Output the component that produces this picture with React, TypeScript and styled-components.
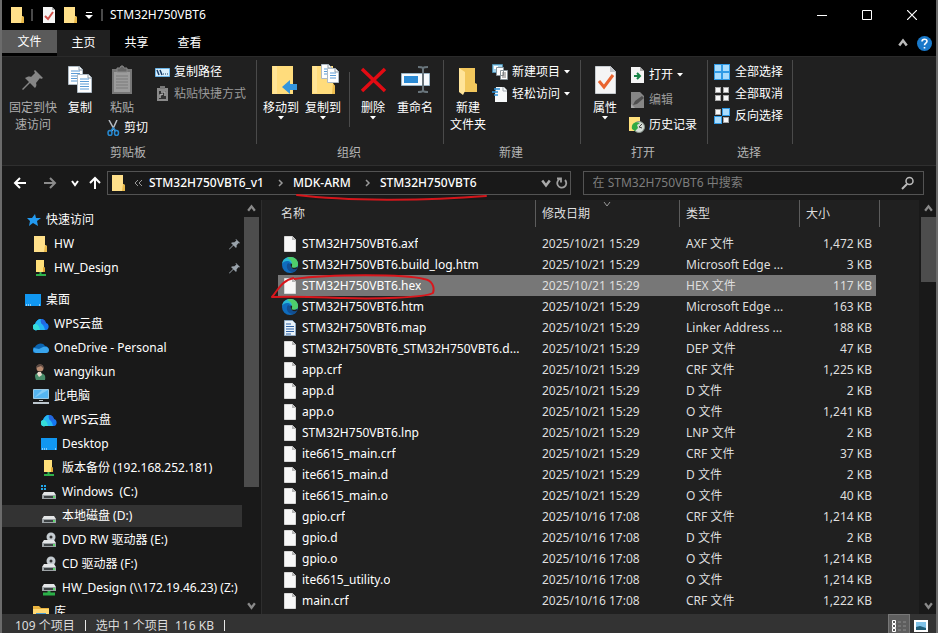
import React from "react";
import styled, { createGlobalStyle, css } from "styled-components";

const GlobalStyle = createGlobalStyle`
  * { box-sizing: border-box; }
  html, body { margin: 0; background: #000; }
  body, button, input, table {
    font-family: "Noto Sans", "Noto Sans CJK SC", sans-serif;
    font-size: 12px;
    line-height: 18px;
    color: #fff;
  }
  button { border: 0; margin: 0; padding: 0; background: none; cursor: default; }
  svg { display: block; flex: none; }
`;

/* ---------- frame ---------- */
const Window = styled.div`
  display: flex;
  flex-direction: column;
  height: 100vh;
  min-width: 800px;
  overflow: hidden;
  border: solid #6b6b6b;
  border-width: 0 2px;
  background: #191919;
`;

const TitleBar = styled.header`
  display: flex;
  align-items: center;
  height: 30px;
  flex: none;
  padding: 0 2px 0 8px;
  background: #000;
`;
const QuickTools = styled.div`
  display: flex;
  align-items: center;
`;
const QuickSeparator = styled.span`
  width: 2px;
  height: 12px;
  margin: 0 5px;
  background: #4a4a4a;
`;
const QuickButton = styled.button<{ $w: number }>`
  display: flex;
  justify-content: center;
  width: ${(p) => p.$w}px;
`;
const Title = styled.h1`
  flex: 1;
  margin: 0;
  padding-left: 2px;
  font-size: 12px;
  font-weight: 400;
`;
const CaptionButton = styled.button`
  display: flex;
  align-items: center;
  justify-content: center;
  width: 45px;
  height: 30px;
`;

const TabBar = styled.nav`
  display: flex;
  height: 26px;
  flex: none;
  background: #000;
`;
const Tab = styled.button<{ $kind?: "file" | "active" }>`
  width: 53px;
  height: 26px;
  ${(p) => p.$kind === "file" && css`
    width: 55px;
    height: 23px;
    background: #5a5a5a;
  `}
  ${(p) => p.$kind === "active" && css`background: #202020;`}
`;
const TabTools = styled.div`
  display: flex;
  align-items: center;
  gap: 9px;
  margin-left: auto;
  padding-right: 4px;
`;

/* ---------- ribbon ---------- */
const Ribbon = styled.section`
  display: flex;
  height: 110px;
  flex: none;
  padding-top: 3px;
  background: #202020;
  border-bottom: 1px solid #2f2f2f;
  border-top: 1px solid #2a2a2a;
`;
const Group = styled.section<{ $w: number }>`
  width: ${(p) => p.$w}px;
`;
const GroupBody = styled.div`
  display: flex;
  height: 84px;
  border-right: 1px solid #4a4a4a;
`;
const GroupLabel = styled.h2`
  margin: 0;
  padding-right: 3px;
  font-size: 12px;
  font-weight: 400;
  text-align: center;
  color: #b4b4b4;
`;
const BigButton = styled.button<{ $w: number; $dim?: boolean }>`
  display: flex;
  flex-direction: column;
  align-items: center;
  width: ${(p) => p.$w}px;
  padding-top: 4px;
  line-height: 17px;
  white-space: nowrap;
  color: ${(p) => (p.$dim ? "#aeaeae" : "#fff")};
  & > svg { margin-bottom: 3px; }
  & > svg + span + svg { margin: 0; }
`;
const ButtonColumn = styled.div<{ $w?: number; $left?: number; $pitch?: number }>`
  display: flex;
  flex-direction: column;
  width: ${(p) => (p.$w ? p.$w + "px" : "auto")};
  padding-left: ${(p) => p.$left || 0}px;
  padding-top: ${(p) => (p.$pitch ? 2 : 1)}px;
  & > button { height: ${(p) => p.$pitch || 22}px; }
`;
const PasteColumn = styled.div`
  display: flex;
  flex-direction: column;
  gap: 3px;
  width: 52px;
  padding-left: 2px;
`;
const SmallButton = styled.button<{ $dim?: boolean; $inset?: number }>`
  display: flex;
  align-items: center;
  gap: 4px;
  padding-left: ${(p) => p.$inset || 0}px;
  white-space: nowrap;
  color: ${(p) => (p.$dim ? "#9a9a9a" : "#fff")};
`;
const InnerRule = styled.span`
  width: 1px;
  height: 55px;
  margin-top: 12px;
  background: #4a4a4a;
`;

/* ---------- navigation ---------- */
const NavRow = styled.div`
  display: flex;
  align-items: center;
  height: 34px;
  flex: none;
  padding: 0 12px 0 3px;
`;
const NavButton = styled.button`
  display: flex;
  align-items: center;
  justify-content: center;
  width: 30px;
  height: 24px;
`;
const NarrowNavButton = styled(NavButton)`
  width: 20px;
`;
const Address = styled.div`
  display: flex;
  align-items: center;
  flex: 456 1 0;
  height: 24px;
  margin-left: 2px;
  padding: 0 2px 0 3px;
  border: 1px solid #535353;
`;
const Crumbs = styled.div`
  position: relative;
  display: flex;
  align-items: center;
`;
const Crumb = styled.a<{ $w: number }>`
  width: ${(p) => p.$w}px;
  color: #fff;
  font-size: 12px;
  font-weight: 500;
  text-decoration: none;
  white-space: nowrap;
`;
const CrumbArrow = styled.span<{ $w?: number }>`
  display: flex;
  justify-content: center;
  width: ${(p) => p.$w || 26}px;
`;
const AddressEnd = styled.div`
  display: flex;
  align-items: center;
  gap: 5px;
  margin-left: auto;
`;
const Underline = styled.svg`
  position: absolute;
  left: 2px;
  top: 18px;
  pointer-events: none;
`;
const SearchBox = styled.label`
  display: flex;
  align-items: center;
  flex: 322 1 0;
  height: 24px;
  margin-left: 12px;
  padding: 0 8px 0 9px;
  border: 1px solid #535353;
`;
const SearchInput = styled.input`
  flex: 1;
  min-width: 0;
  padding: 0;
  border: 0;
  outline: 0;
  background: none;
  &::placeholder { color: #7d7d7d; opacity: 1; }
`;

/* ---------- body ---------- */
const Body = styled.div`
  display: flex;
  flex: 1;
  min-height: 0;
`;
const Sidebar = styled.aside`
  display: flex;
  width: 260px;
  flex: none;
  padding-right: 2px;
  border-right: 1px solid #2e2e2e;
`;
const Tree = styled.ul`
  flex: 1;
  min-width: 0;
  margin: 0;
  padding: 8px 0 0;
  list-style: none;
  overflow: hidden;
`;
const TreeItem = styled.li<{ $gap?: boolean }>`
  margin-top: ${(p) => (p.$gap ? 8 : 0)}px;
`;
const TreeButton = styled.button<{ $level: number; $selected?: boolean }>`
  display: flex;
  align-items: center;
  gap: 5px;
  width: 100%;
  height: 24px;
  padding-left: ${(p) => 15 + p.$level * 8}px;
  white-space: nowrap;
  border: solid transparent;
  border-width: 1px 0;
  background: ${(p) => (p.$selected ? "#333" : "none")};
  background-clip: padding-box;
`;
const TreePin = styled.span`
  margin-left: auto;
  padding-right: 2px;
`;
const Scrollbar = styled.div`
  display: flex;
  flex-direction: column;
  width: 17px;
  flex: none;
  padding: 0 0 0 2px;
  background: #191919;
`;
const ScrollButton = styled.button`
  display: flex;
  align-items: center;
  justify-content: center;
  height: 17px;
  flex: none;
`;
const Track = styled.div`
  flex: 1;
`;
const Thumb = styled.div<{ $size: number }>`
  height: ${(p) => p.$size}%;
  background: #4d4d4d;
`;
const FilePane = styled.main`
  display: flex;
  flex: 1;
  min-width: 0;
  background: #202020;
  overflow: hidden;
`;
const TableArea = styled.div`
  flex: 1;
  min-width: 0;
  padding-left: 16px;
  overflow: hidden;
`;
const FileTable = styled.table`
  table-layout: fixed;
  width: 602px;
  border-collapse: separate;
  border-spacing: 0;
`;
const HeadCell = styled.th<{ $w: number; $first?: boolean }>`
  position: relative;
  width: ${(p) => p.$w}px;
  height: 27px;
  padding: 0 0 0 ${(p) => (p.$first ? 3 : 6)}px;
  border-right: 1px solid #5c5c5c;
  font-weight: 400;
  text-align: left;
  color: #dedede;
`;
const SortMark = styled.span`
  position: absolute;
  top: 0;
  left: 67px;
`;
const Spacer = styled.td`
  height: 6px;
  padding: 0;
`;
const FileRow = styled.tr<{ $selected?: boolean }>`
  & > td { background-color: ${(p) => (p.$selected ? "#777" : "transparent")}; }
`;
const Cell = styled.td<{ $num?: boolean }>`
  position: relative;
  height: 21px;
  padding: 0 0 0 6px;
  color: #dedede;
  white-space: nowrap;
  ${(p) => p.$num && css`
    padding: 0 4px 0 0;
    border-right: 4px solid transparent;
    background-clip: padding-box;
    text-align: right;
  `}
`;
const NameCell = styled(Cell)`
  padding-left: 3px;
  color: #fff;
`;
const FileName = styled.div`
  display: flex;
  align-items: center;
  gap: 3px;
  & > span { overflow: hidden; text-overflow: ellipsis; max-width: 228px; }
`;
const Circle = styled.svg`
  position: absolute;
  left: -8px;
  top: -1px;
  pointer-events: none;
  overflow: visible;
`;

/* ---------- status ---------- */
const StatusBar = styled.footer`
  display: flex;
  align-items: center;
  height: 19px;
  flex: none;
  padding: 4px 4px 0 13px;
  background: #333;
  color: #dcdcdc;
`;
const StatusText = styled.span`
  white-space: pre;
`;
const StatusRule = styled.span`
  width: 1px;
  height: 11px;
  margin: 0 10px;
  background: #e8e8e8;
`;
const ViewButtons = styled.div`
  display: flex;
  align-self: stretch;
  margin: -4px 0 0 auto;
`;
const ViewButton = styled.button<{ $on?: boolean }>`
  display: flex;
  justify-content: center;
  align-items: center;
  width: 22px;
  padding-top: 3px;
  background: ${(p) => (p.$on ? "#5e5e5e" : "none")};
  border: 1px solid ${(p) => (p.$on ? "#777" : "transparent")};
  border-bottom: 0;
`;

/* ---------- icons ---------- */
const Svg = ({ w, h, vb, children }: { w: number; h: number; vb?: string; children: React.ReactNode }) => (
  <svg width={w} height={h} viewBox={vb || `0 0 ${w} ${h}`} fill="none" aria-hidden="true">{children}</svg>
);
const Folder = () => (
  <Svg w={16} h={16}>
    <path d="M1 0h11v9l2 1v6H1z" fill="#ffe08a" />
    <path d="M12 9l2 1v6h-3z" fill="#e9b94a" />
  </Svg>
);
const NetFolder = () => (
  <Svg w={16} h={16}>
    <path d="M3 0h8v7l1 1v4H3z" fill="#ffe07a" /><path d="M10 7l2 1v4h-2z" fill="#e2ab35" />
    <path d="M7.500 12v3M3 15h10" stroke="#2fb24c" strokeWidth="2" />
  </Svg>
);
const CheckDoc = () => (
  <Svg w={14} h={16}>
    <path d="M1 0h9l3 3v13H1z" fill="#f5f5f5" /><path d="M10 0v3h3" fill="#aaa" />
    <path d="M3 9l3 3 5-7" stroke="#d0504a" strokeWidth="2" />
  </Svg>
);
const Caret = () => <Svg w={6} h={4}><path d="M0 0h6L3 3.500z" fill="#fff" /></Svg>;
const Chevron = ({ dir, color = "#fff", size = 8, weight = 2 }: { dir: "up" | "down" | "right"; color?: string; size?: number; weight?: number }) => (
  <Svg w={size} h={size} vb="0 0 8 8">
    <path d={{ up: "M1 6l3-4 3 4", down: "M1 2l3 4 3-4", right: "M3 1l3 3-3 3" }[dir]} stroke={color} strokeWidth={weight} />
  </Svg>
);
const Pin = ({ size, color }: { size: number; color: string }) => (
  <Svg w={size} h={size} vb="0 0 22 22">
    <path d="M14 0l8 8-2 1-1-1-4 5c1 2 0 4-1 5l-5-5-8 8-1-1 8-8-4-4c2-1 4-2 6-1l5-4-2-2z" fill={color} />
  </Svg>
);
const BigPin = () => (
  <Svg w={32} h={32}>
    <g transform="translate(5 6)"><path d="M13 0l8 8-2 1-1-1-4 5c1 2 0 4-1 5l-5-5-7 7-1-1 7-7-4-4c2-1 4-2 6-1l4-4-1-2z" fill="#858585" /></g>
  </Svg>
);
const Page = ({ x, y, w = 15, h = 19 }: { x: number; y: number; w?: number; h?: number }) => (
  <g transform={`translate(${x} ${y})`}>
    <path d={`M.5.5h${w - 4}l3 3v${h - 4}H.5z`} fill="#fff" stroke="#aebac4" />
    <path d={`M${w - 4} .5v3.500h3.500`} stroke="#8d9aa5" />
    {Array.from({ length: Math.floor((h - 6) / 2.5) }, (_, i) => (
      <path key={i} d={`M3 ${5 + i * 2.5}h${w - 6}`} stroke="#5a9bd5" />
    ))}
  </g>
);
const CopyIcon = () => <Svg w={32} h={32}><Page x={4} y={2} /><Page x={13} y={10} /></Svg>;
const PasteIcon = () => (
  <Svg w={32} h={32}>
    <path d="M6 5h20v25H6z" fill="#777" /><path d="M8 8h16v20H8z" fill="#9c9c9c" />
    <path d="M11 4h3l1-2h2l1 2h3v4H11z" fill="#666" stroke="#888" />
    <path d="M10 12h12M10 15h12M10 18h12M10 21h12M10 24h12" stroke="#7b7b7b" />
  </Svg>
);
const PathIcon = () => (
  <Svg w={16} h={16}>
    <path d="M1.500 4.500h14v8h-14z" fill="#d9effc" stroke="#6bb5e8" />
    <path d="M3 6l2 5M6 6l2 5" stroke="#143a66" strokeWidth="1.500" /><path d="M9 10h1M11 10h1M13 10h1" stroke="#143a66" />
  </Svg>
);
const ShortcutIcon = () => (
  <Svg w={16} h={16}>
    <path d="M3 2h11v13H3z" fill="#8a8a8a" /><path d="M6 0h5v3H6z" fill="#777" /><path d="M5 5h7v8H5z" fill="#333" />
    <path d="M6 12V9l3-1M7 6h4v4" stroke="#aaa" strokeWidth="1.500" />
  </Svg>
);
const CutIcon = () => (
  <Svg w={13} h={16}>
    <path d="M2 0l6 11M10 0L5 11" stroke="#b7bdc4" strokeWidth="1.500" />
    <ellipse cx="3" cy="13" rx="2" ry="2.500" stroke="#2689d1" strokeWidth="1.500" />
    <ellipse cx="9.500" cy="13" rx="2" ry="2.500" stroke="#2689d1" strokeWidth="1.500" />
    <path d="M4 11l2-3 3 3" stroke="#2689d1" strokeWidth="1.500" />
  </Svg>
);
const BigFolder = () => <><path d="M5 3h21v18l2 2v8H5z" fill="#ffdc7c" /><path d="M6 3h4v27H6z" fill="#ffe9a9" opacity=".6" /><path d="M26 20l2 3v8h-3z" fill="#eebd4e" /></>;
const MoveIcon = () => <Svg w={32} h={32}><g transform="translate(2 -1)"><path d="M5 3h21v28H5z" fill="#ffdc7c" /><path d="M6 3h4v28H6z" fill="#ffe9a9" opacity=".6" /><path d="M15 24l8-7v4h8v6h-8v4z" fill="#3495dc" /></g></Svg>;
const CopyToIcon = () => <Svg w={32} h={32}><g transform="translate(0 -1)"><BigFolder /><Page x={14} y={1} w={11} h={15} /><Page x={20} y={5} w={12} h={15} /></g></Svg>;
const DeleteIcon = () => <Svg w={32} h={32}><path d="M5 5l23 22M28 5L5 27" stroke="#e30b13" strokeWidth="3.500" /></Svg>;
const RenameIcon = () => (
  <Svg w={32} h={32}>
    <path d="M2.500 9.500h28v12h-28z" fill="#f7fbfe" stroke="#9ab5c6" /><path d="M5 12h14v7H5z" fill="#2b8bd5" />
    <path d="M19 3c3 0 4 0 5 1 1-1 2-1 5-1M24 4v23M19 28c3 0 4 0 5-1 1 1 2 1 5 1" stroke="#68747b" strokeWidth="2" />
  </Svg>
);
const NewFolderIcon = () => (
  <Svg w={32} h={32}>
    <path d="M7 4h16v15l2 1v8H7z" fill="#f2c75c" /><path d="M7 4l6 4v19l-2 4-4-3z" fill="#ffe49a" />
  </Svg>
);
const NewItemIcon = () => (
  <Svg w={16} h={16}>
    <path d="M.5.5h10v8H.5z" fill="#9ed3ee" stroke="#4d8cad" /><path d="M2 2h4v3H2z" fill="#fff" />
    <path d="M4.500 3.500h7v8h-7zM8.500 6.500h7v9h-7z" fill="#fff" stroke="#87939a" />
    <path d="M10 9h4M10 11h4M10 13h4" stroke="#777" />
  </Svg>
);
const EasyIcon = () => (
  <Svg w={16} h={16}><path d="M4 1h8l3 3v12H3V8z" fill="#f7f9fa" /><path d="M11 1v4h4" stroke="#a1a8af" /><path d="M2 3h6M0 6h6M2 9h4" stroke="#2c91d7" strokeWidth="1.500" /></Svg>
);
const PropertiesIcon = () => (
  <Svg w={32} h={32}><path d="M6.500 2.500h15l5 5v22h-20z" fill="#f5f5f5" stroke="#c6cbd0" /><path d="M21 2v6h6" fill="#c1c5c9" /><path d="M10 17l5 6 9-12" stroke="#e9642f" strokeWidth="3" /></Svg>
);
const OpenIcon = () => (
  <Svg w={16} h={16}><path d="M2 0h9l4 4v12H2z" fill="#f5f5f5" /><path d="M11 0v4h4" fill="#aaa" /><path d="M5 9h6M8 6l3 3-3 3" stroke="#168347" strokeWidth="2" /></Svg>
);
const EditIcon = () => (
  <Svg w={16} h={16}><path d="M2 0h9l4 4v12H2z" fill="#868686" /><path d="M4 13l2-4 7-5 2 2-7 6z" fill="#4f4f4f" /><path d="M2 12l4 4H2z" fill="#a9a9a9" /></Svg>
);
const HistoryIcon = () => (
  <Svg w={16} h={16}><path d="M0 0h11v14H0z" fill="#ffe07c" /><circle cx="10" cy="10" r="5.500" fill="#d5ddd8" stroke="#89948c" /><path d="M3 12c-1-5 3-8 8-6L8 8l1 3-3 3z" fill="#31aa43" /><path d="M13 7l-3 3 3 1" stroke="#444" /></Svg>
);
const SelectIcon = ({ kind }: { kind: "all" | "none" | "invert" }) => (
  <Svg w={17} h={17}>
    {[[0, 0], [8, 0], [0, 8], [8, 8]].map(([x, y], i) => {
      const on = kind === "all" || (kind === "invert" && (i === 1 || i === 2));
      return <rect key={i} x={x + (on ? 0.5 : 1.5)} y={y + (on ? 0.5 : 1.5)} width={on ? 7 : 5} height={on ? 7 : 5} fill={on ? "#a9dcfd" : "#f7f7f7"} stroke={on ? "#319be6" : "#a8a8a8"} />;
    })}
  </Svg>
);
const Arrow = ({ dir, color = "#fff" }: { dir: "left" | "right" | "up"; color?: string }) => (
  <Svg w={14} h={14}><path d={{ left: "M13 7H2M7 2L2 7l5 5", right: "M1 7h11M7 2l5 5-5 5", up: "M7 13V2M2 7l5-5 5 5" }[dir]} stroke={color} strokeWidth="2" /></Svg>
);
const RefreshIcon = () => <Svg w={12} h={14}><path d="M9 4a4.500 4.500 0 1 1-5-1M1 2.500h4v4" stroke="#a0a0a0" strokeWidth="1.800" /></Svg>;
const SearchIcon = () => <Svg w={14} h={14}><circle cx="8.500" cy="5" r="3.500" stroke="#bbb" strokeWidth="1.500" /><path d="M6 8l-5 5" stroke="#bbb" strokeWidth="2" /></Svg>;
const FileIcon = () => <Svg w={18} h={16}><path d="M3.500.5h8l3 3v12h-11z" fill="#f7f7f7" stroke="#d8d8d8" /><path d="M11 0v4h4" fill="#b5b5b5" /></Svg>;
const MapIcon = () => <Svg w={18} h={16}><path d="M3.500.5h8l3 3v12h-11z" fill="#e9f3fb" stroke="#8ea9c3" /><path d="M5 4h5M5 6.500h8M5 9h8M5 11.500h8M5 14h5" stroke="#2e62a6" strokeWidth="1.200" /></Svg>;
const EdgeIcon = () => (
  <Svg w={18} h={16}>
    <circle cx="9" cy="8" r="8" fill="#0f6cbd" />
    <path d="M1 7C2 2 5 0 9 0c5 0 8 4 8 7 0 3-2 4-5 4-2 0-2-1-2-2 1-3-1-5-4-5-2 0-4 1-5 3z" fill="#29b7d3" />
    <path d="M10 0c4 0 7 3 7 7 0 3-2 4-5 4-2 0-2-1-2-2l1-2c0-3-2-5-5-6 1-1 3-1 4-1z" fill="#4fcf6b" />
    <path d="M7 6c-3 4 0 9 5 9 2 0 3-1 4-3-3 1-8-1-7-5z" fill="#124f93" />
    <path d="M9.500 7c1-1 2 0 1.500 1.500-1 2 1 2.500 3 2.200l2.500-.7-1 2c-3 1-6.500-1-6-5z" fill="#202020" />
  </Svg>
);
const StarIcon = () => <Svg w={16} h={16}><path d="M10 2l1 4h5l-4 3 1 5-5-3-4 3 1-5-3-3h5z" fill="#239af0" /></Svg>;
const DesktopIcon = () => <Svg w={16} h={16}><path d="M0 2h16v12H0z" fill="#1197f1" /><path d="M1 13h1M3 13h1M5 13h1M14 13h1" stroke="#fff" /></Svg>;
const WpsIcon = () => (
  <Svg w={16} h={16}>
    <path d="M4 14a3 3 0 0 1-2-6c1-3 3-5 6-5 3 0 4 2 5 4 4 1 3 7 0 7z" fill="#1677f2" />
    <path d="M4 14a3 3 0 0 1-2-6c1-3 3-5 6-5-2 4 3 5 4 11z" fill="#27b7f2" />
    <path d="M2 8c1 0 4 0 5 6H4a3 3 0 0 1-2-6z" fill="#35ddd8" />
    <path d="M8 3c3 0 4 2 5 4-1 2-3 2-5 0z" fill="#2466df" />
  </Svg>
);
const OneDriveIcon = () => (
  <Svg w={16} h={16}>
    <path d="M3 13a3 3 0 0 1-1-6c2-4 8-5 10-1 4 0 5 6 1 7z" fill="#0b64b0" />
    <path d="M3 13a3 3 0 0 1-2-5l5 1 4-2c4-1 6 1 6 3 0 2-1 3-3 3z" fill="#39a4ec" />
  </Svg>
);
const UserIcon = () => <Svg w={16} h={16}><path d="M3 16c-2-5-1-7 3-7 5 0 7 2 6 7z" fill="#488b6a" /><path d="M5 8h3l1 3-3 2-2-3z" fill="#eadbce" /><circle cx="7" cy="4" r="3.500" fill="#b88b71" /><path d="M3 4c0-5 8-5 7 0l-2-2z" fill="#5c4a43" /></Svg>;
const PcIcon = () => <Svg w={16} h={16}><path d="M.5 1.500h15v9H.5z" fill="#55b5f1" stroke="#9bcae6" /><path d="M1 10l8-8h6z" fill="#83cbf5" /><path d="M6 12h4v1H6zM0 14h16v2H0z" fill="#bdc7ce" /></Svg>;
const DriveIcon = ({ kind }: { kind?: "win" | "disc" | "net" }) => (
  <Svg w={16} h={16}>
    {kind === "win" && <path d="M0 1h2v2H0zM3 1h2v2H3zM0 4h2v2H0zM3 4h2v2H3z" fill="#22a6e8" />}
    {kind === "disc" && <><circle cx="10" cy="5" r="4.500" fill="#c5ccd1" /><circle cx="10" cy="5" r="1.500" fill="#333" /></>}
    <g transform={kind === "net" ? "translate(0 -4)" : undefined}>
      <path d="M3 8h10l2 3H1z" fill="#e4e6e7" /><path d="M1 11h14v4H1z" fill="#9da3a6" /><path d="M3 12h9v2H3z" fill="#3d4244" /><path d="M12 12h2v2h-2z" fill="#5bd96c" />
    </g>
    {kind === "net" && <path d="M2 14h12M8 11v4" stroke="#2aaf48" strokeWidth="3" />}
  </Svg>
);
const LibraryIcon = () => <Svg w={16} h={16}><path d="M0 2h6l2 2h8v12H0z" fill="#e9b33f" /><path d="M0 5h16v11H0z" fill="#ffd975" /><path d="M3 9h10v7H3z" fill="#4a9bd0" /></Svg>;
const HelpIcon = () => <Svg w={15} h={15}><circle cx="7.500" cy="7.500" r="7.500" fill="#1979ca" /><path d="M5 5.500c0-3 5-3 5-.3 0 2-2.500 1.700-2.500 4M7.500 11v1.500" stroke="#fff" strokeWidth="1.600" /></Svg>;
const DetailsIcon = () => <Svg w={16} h={14}><path d="M1.500 1.500h3v3h-3zM1.500 5.500h3v3h-3zM1.500 9.500h3v3h-3z" stroke="#fff" /><path d="M7 3h3M12 3h3M7 7h3M12 7h3M7 11h3M12 11h3" stroke="#8d8d8d" /></Svg>;
const ThumbsIcon = () => <Svg w={14} h={12}><path d="M1 1h12v10H1z" fill="#7fc2e8" stroke="#fff" strokeWidth="2" /><path d="M2 7l4-1 6 2v2H2z" fill="#1f5d78" /></Svg>;

/* ---------- data ---------- */
type TreeNode = { level: number; icon: React.ReactNode; text: string; pin?: boolean; gap?: boolean; selected?: boolean };
const tree: TreeNode[] = [
  { level: 1, icon: <StarIcon />, text: "快速访问" },
  { level: 2, icon: <Folder />, text: "HW", pin: true },
  { level: 2, icon: <NetFolder />, text: "HW_Design", pin: true },
  { level: 1, icon: <DesktopIcon />, text: "桌面", gap: true },
  { level: 2, icon: <WpsIcon />, text: "WPS云盘" },
  { level: 2, icon: <OneDriveIcon />, text: "OneDrive - Personal" },
  { level: 2, icon: <UserIcon />, text: "wangyikun" },
  { level: 2, icon: <PcIcon />, text: "此电脑" },
  { level: 3, icon: <WpsIcon />, text: "WPS云盘" },
  { level: 3, icon: <DesktopIcon />, text: "Desktop" },
  { level: 3, icon: <NetFolder />, text: "版本备份 (192.168.252.181)" },
  { level: 3, icon: <DriveIcon kind="win" />, text: "Windows\u00a0 (C:)" },
  { level: 3, icon: <DriveIcon />, text: "本地磁盘 (D:)", selected: true },
  { level: 3, icon: <DriveIcon kind="disc" />, text: "DVD RW 驱动器 (E:)" },
  { level: 3, icon: <DriveIcon kind="disc" />, text: "CD 驱动器 (F:)" },
  { level: 3, icon: <DriveIcon kind="net" />, text: "HW_Design (\\\\172.19.46.23) (Z:)" },
  { level: 2, icon: <LibraryIcon />, text: "库" },
];

const D21 = "2025/10/21 15:29";
const D16 = "2025/10/16 17:08";
const files: [string, string, string, string][] = [
  ["STM32H750VBT6.axf", D21, "AXF 文件", "1,472 KB"],
  ["STM32H750VBT6.build_log.htm", D21, "Microsoft Edge ...", "3 KB"],
  ["STM32H750VBT6.hex", D21, "HEX 文件", "117 KB"],
  ["STM32H750VBT6.htm", D21, "Microsoft Edge ...", "163 KB"],
  ["STM32H750VBT6.map", D21, "Linker Address ...", "188 KB"],
  ["STM32H750VBT6_STM32H750VBT6.d...", D21, "DEP 文件", "47 KB"],
  ["app.crf", D21, "CRF 文件", "1,225 KB"],
  ["app.d", D21, "D 文件", "2 KB"],
  ["app.o", D21, "O 文件", "1,241 KB"],
  ["STM32H750VBT6.lnp", D21, "LNP 文件", "2 KB"],
  ["ite6615_main.crf", D21, "CRF 文件", "37 KB"],
  ["ite6615_main.d", D21, "D 文件", "2 KB"],
  ["ite6615_main.o", D21, "O 文件", "40 KB"],
  ["gpio.crf", D16, "CRF 文件", "1,214 KB"],
  ["gpio.d", D16, "D 文件", "2 KB"],
  ["gpio.o", D16, "O 文件", "1,214 KB"],
  ["ite6615_utility.o", D16, "O 文件", "1,214 KB"],
  ["main.crf", D16, "CRF 文件", "1,222 KB"],
];
const iconFor = (name: string) => (name.endsWith(".htm") ? <EdgeIcon /> : name.endsWith(".map") ? <MapIcon /> : <FileIcon />);

const ScrollTrack = ({ size }: { size: number }) => (
  <Scrollbar>
    <ScrollButton aria-label="向上滚动"><Chevron dir="up" color="#8a8a8a" size={9} /></ScrollButton>
    <Track><Thumb $size={size} /></Track>
    <ScrollButton aria-label="向下滚动"><Chevron dir="down" color="#8a8a8a" size={9} /></ScrollButton>
  </Scrollbar>
);

export default function App() {
  return (
    <>
      <GlobalStyle />
      <Window>
        <TitleBar>
          <QuickTools>
            <QuickButton $w={16} aria-label="文件夹"><Folder /></QuickButton>
            <QuickSeparator />
            <QuickButton $w={22} aria-label="属性"><CheckDoc /></QuickButton>
            <QuickButton $w={22} aria-label="新建文件夹"><Folder /></QuickButton>
            <QuickButton $w={14} aria-label="自定义快速访问工具栏">
              <Svg w={8} h={7}><path d="M1 .5h6" stroke="#fff" /><path d="M0 3h8L4 7z" fill="#fff" /></Svg>
            </QuickButton>
            <QuickSeparator />
          </QuickTools>
          <Title>STM32H750VBT6</Title>
          <CaptionButton aria-label="最小化"><Svg w={10} h={10}><path d="M0 5.500h10" stroke="#fff" /></Svg></CaptionButton>
          <CaptionButton aria-label="最大化"><Svg w={10} h={10}><path d="M.5.5h9v9h-9z" stroke="#fff" /></Svg></CaptionButton>
          <CaptionButton aria-label="关闭"><Svg w={10} h={10}><path d="M0 0l10 10M10 0L0 10" stroke="#fff" strokeWidth="1.200" /></Svg></CaptionButton>
        </TitleBar>

        <TabBar>
          <Tab $kind="file">文件</Tab>
          <Tab $kind="active">主页</Tab>
          <Tab>共享</Tab>
          <Tab>查看</Tab>
          <TabTools>
            <button aria-label="折叠功能区"><Chevron dir="up" color="#bbb" size={10} /></button>
            <button aria-label="帮助"><HelpIcon /></button>
          </TabTools>
        </TabBar>

        <Ribbon>
          <Group $w={255}>
            <GroupBody>
              <BigButton $w={62} $dim><BigPin /><span>固定到快<br />速访问</span></BigButton>
              <BigButton $w={32}><CopyIcon /><span>复制</span></BigButton>
              <PasteColumn>
                <BigButton $w={48} $dim><PasteIcon /><span>粘贴</span></BigButton>
                <SmallButton $inset={9}><CutIcon />剪切</SmallButton>
              </PasteColumn>
              <ButtonColumn $left={6}>
                <SmallButton><PathIcon />复制路径</SmallButton>
                <SmallButton $dim><ShortcutIcon />粘贴快捷方式</SmallButton>
              </ButtonColumn>
            </GroupBody>
            <GroupLabel>剪贴板</GroupLabel>
          </Group>
          <Group $w={187}>
            <GroupBody>
              <BigButton $w={48}><MoveIcon /><span>移动到</span><Caret /></BigButton>
              <BigButton $w={36}><CopyToIcon /><span>复制到</span><Caret /></BigButton>
              <ButtonColumn $w={8} />
              <InnerRule />
              <BigButton $w={46}><DeleteIcon /><span>删除</span><Caret /></BigButton>
              <BigButton $w={38}><RenameIcon /><span>重命名</span></BigButton>
            </GroupBody>
            <GroupLabel>组织</GroupLabel>
          </Group>
          <Group $w={137}>
            <GroupBody>
              <BigButton $w={48}><NewFolderIcon /><span>新建<br />文件夹</span></BigButton>
              <ButtonColumn>
                <SmallButton><NewItemIcon />新建项目<Caret /></SmallButton>
                <SmallButton><EasyIcon />轻松访问<Caret /></SmallButton>
              </ButtonColumn>
            </GroupBody>
            <GroupLabel>新建</GroupLabel>
          </Group>
          <Group $w={127}>
            <GroupBody>
              <BigButton $w={48}><PropertiesIcon /><span>属性</span><Caret /></BigButton>
              <ButtonColumn $pitch={25}>
                <SmallButton><OpenIcon />打开<Caret /></SmallButton>
                <SmallButton $dim><EditIcon />编辑</SmallButton>
                <SmallButton><HistoryIcon />历史记录</SmallButton>
              </ButtonColumn>
            </GroupBody>
            <GroupLabel>打开</GroupLabel>
          </Group>
          <Group $w={85}>
            <GroupBody>
              <ButtonColumn $left={6}>
                <SmallButton><SelectIcon kind="all" />全部选择</SmallButton>
                <SmallButton><SelectIcon kind="none" />全部取消</SmallButton>
                <SmallButton><SelectIcon kind="invert" />反向选择</SmallButton>
              </ButtonColumn>
            </GroupBody>
            <GroupLabel>选择</GroupLabel>
          </Group>
        </Ribbon>

        <NavRow>
          <NavButton aria-label="后退"><Arrow dir="left" /></NavButton>
          <NavButton aria-label="前进"><Arrow dir="right" color="#8b8b8b" /></NavButton>
          <NarrowNavButton aria-label="最近位置"><Chevron dir="down" /></NarrowNavButton>
          <NarrowNavButton aria-label="上一级"><Arrow dir="up" /></NarrowNavButton>
          <Address>
            <Folder />
            <CrumbArrow $w={22}>
              <Svg w={8} h={8}><path d="M4 1L1 4l3 3M8 1L5 4l3 3" stroke="#999" /></Svg>
            </CrumbArrow>
            <Crumb $w={118} href="#v1">STM32H750VBT6_v1</Crumb>
            <CrumbArrow><Chevron dir="right" color="#999" weight={1.5} /></CrumbArrow>
            <Crumbs>
              <Crumb $w={61} href="#mdk">MDK-ARM</Crumb>
              <CrumbArrow><Chevron dir="right" color="#999" weight={1.5} /></CrumbArrow>
              <Crumb $w={100} href="#target">STM32H750VBT6</Crumb>
              <Underline width="194" height="10" viewBox="0 0 194 10" fill="none" aria-hidden="true">
                <path d="M2 3C50 9 130 9 191 4" stroke="#d3161b" strokeWidth="2" strokeLinecap="round" />
              </Underline>
            </Crumbs>
            <AddressEnd>
              <button aria-label="以前的位置"><Chevron dir="down" color="#aaa" size={10} /></button>
              <button aria-label="刷新"><RefreshIcon /></button>
            </AddressEnd>
          </Address>
          <SearchBox>
            <SearchInput type="text" aria-label="搜索" placeholder="在 STM32H750VBT6 中搜索" />
            <SearchIcon />
          </SearchBox>
        </NavRow>

        <Body>
          <Sidebar>
            <Tree>
              {tree.map((n, i) => (
                <TreeItem key={i} $gap={n.gap}>
                  <TreeButton $level={n.level} $selected={n.selected}>
                    {n.icon}
                    {n.text}
                    {n.pin && <TreePin><Pin size={11} color="#9aa3ab" /></TreePin>}
                  </TreeButton>
                </TreeItem>
              ))}
            </Tree>
            <ScrollTrack size={71} />
          </Sidebar>
          <FilePane>
            <TableArea>
              <FileTable>
                <thead>
                  <tr>
                    <HeadCell $w={258} $first>名称</HeadCell>
                    <HeadCell $w={144}>修改日期<SortMark><Chevron dir="down" color="#999" weight={1} /></SortMark></HeadCell>
                    <HeadCell $w={120}>类型</HeadCell>
                    <HeadCell $w={80}>大小</HeadCell>
                  </tr>
                </thead>
                <tbody>
                  <tr><Spacer colSpan={4} /></tr>
                  {files.map(([name, date, type, size]) => {
                    const selected = name.endsWith(".hex");
                    return (
                      <FileRow key={name} $selected={selected}>
                        <NameCell>
                          <FileName>{iconFor(name)}<span>{name}</span></FileName>
                          {selected && (
                            <Circle width="166" height="26" viewBox="0 0 166 26" fill="none" aria-hidden="true">
                              <path d="M24 5C60 0 135 0 154 5c8 1 11 8 9 14-8 5-60 6-90 5-30-1-45-2-71-1C8 16 12 6 24 4" stroke="#d9161c" strokeWidth="2" strokeLinejoin="round" />
                            </Circle>
                          )}
                        </NameCell>
                        <Cell>{date}</Cell>
                        <Cell>{type}</Cell>
                        <Cell $num>{size}</Cell>
                      </FileRow>
                    );
                  })}
                </tbody>
              </FileTable>
            </TableArea>
            <ScrollTrack size={17} />
          </FilePane>
        </Body>

        <StatusBar>
          <StatusText>109 个项目</StatusText>
          <StatusRule />
          <StatusText>选中 1 个项目  116 KB</StatusText>
          <StatusRule />
          <ViewButtons>
            <ViewButton $on aria-label="详细信息"><DetailsIcon /></ViewButton>
            <ViewButton aria-label="大缩略图"><ThumbsIcon /></ViewButton>
          </ViewButtons>
        </StatusBar>
      </Window>
    </>
  );
}
